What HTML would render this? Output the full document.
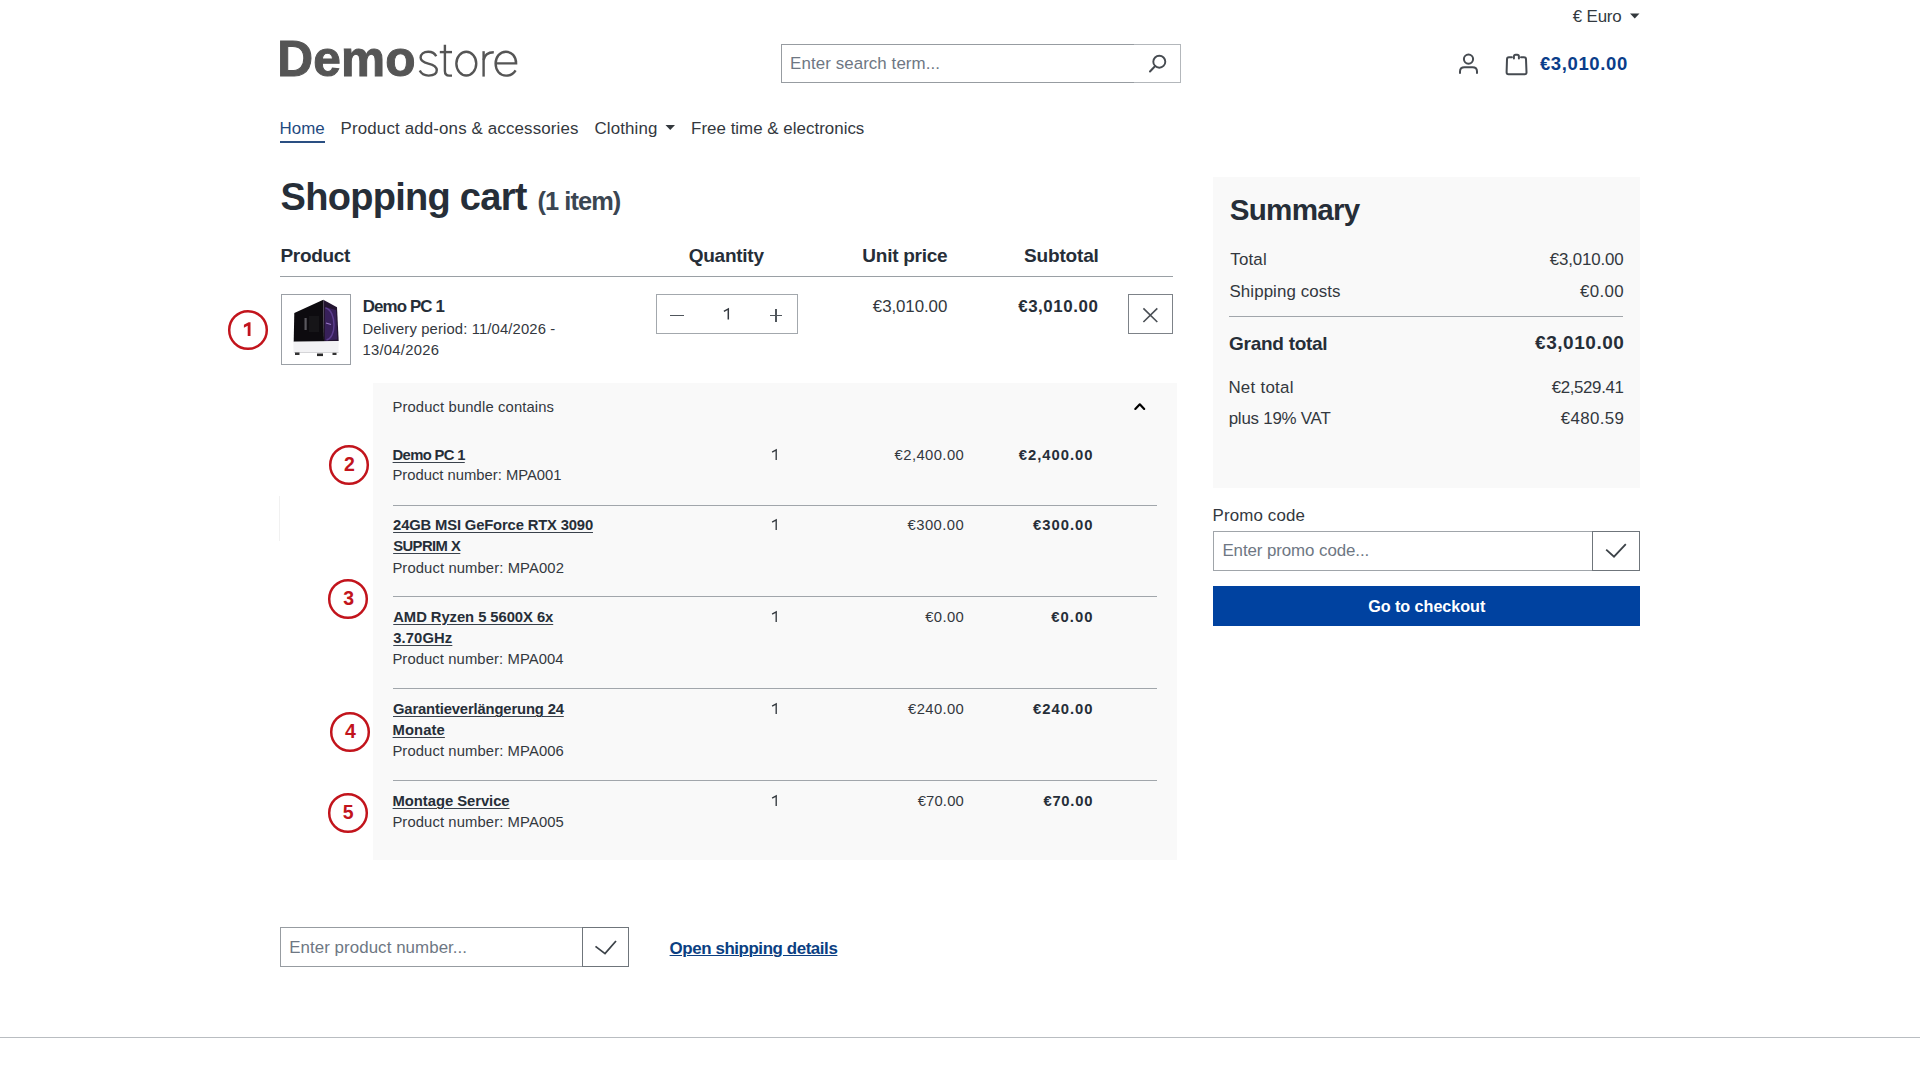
<!DOCTYPE html>
<html><head><meta charset="utf-8"><title>Shopping cart | Demostore</title>
<style>
html,body{margin:0;padding:0;background:#fff;width:1920px;height:1080px;overflow:hidden}
body{position:relative;font-family:"Liberation Sans",sans-serif}
.t{position:absolute;white-space:nowrap;font-family:"Liberation Sans",sans-serif}
.b{position:absolute;box-sizing:border-box}
.ic{position:absolute;overflow:visible}
</style></head><body>
<div class="t " style="left:1572.85px;top:7.00px;font-size:16.9px;line-height:19px;letter-spacing:-0.190px;color:#333a40;">€ Euro</div>
<svg class="ic" style="left:1628px;top:11px" width="14" height="10"><path d="M2 2.5 L11.5 2.5 L6.75 7.5 Z" fill="#33383d"/></svg>
<div class="t " style="left:277.20px;top:31.40px;font-size:49.6px;line-height:56px;font-weight:700;letter-spacing:0.150px;color:#555555;-webkit-text-stroke:1px #555555;">Demo</div>
<svg class="ic" style="left:0;top:0" width="530" height="90"><g fill="none" stroke="#555555" stroke-width="2.4">
<path d="M436.2 56.3 C434.8 53.2 431.8 51.7 428.2 51.7 C423.6 51.7 420.6 54.3 420.6 57.6 C420.6 61.2 423.5 62.4 428.3 63.6 C433.5 64.9 436.8 66.3 436.8 70.1 C436.8 73.5 433.6 75.6 428.6 75.6 C424.3 75.6 421.2 73.7 419.8 70.6"/>
<path d="M444.9 44.8 V71 C444.9 74.3 446.3 75.6 449.2 75.6 H452"/>
<path d="M439.8 52.1 H452"/>
<ellipse cx="466.3" cy="63.6" rx="9.95" ry="11.9"/>
<path d="M483.6 51.2 V76.6"/>
<path d="M483.6 60 C484.6 54.5 488 52.3 493.8 52.3"/>
<path d="M495.6 63.4 H516.1 C516.1 56.4 511.6 51.7 505.9 51.7 C499.9 51.7 495.6 56.9 495.6 63.6 C495.6 70.5 500 75.6 506.1 75.6 C510.4 75.6 513.6 73.6 515.6 70.3"/>
</g></svg>
<div class="b" style="left:781px;top:44px;width:400px;height:39px;border:1px solid #979ca1;background:#fff"></div>
<div class="b" style="left:1134px;top:44px;width:47px;height:39px;border:1px solid #b3b7bb;border-left:0"></div>
<div class="t " style="left:790.10px;top:54.00px;font-size:16.9px;line-height:19px;letter-spacing:0.082px;color:#6e7783;">Enter search term...</div>
<svg class="ic" style="left:1145px;top:50px" width="24" height="26"><circle cx="14.3" cy="11.7" r="6" fill="none" stroke="#464b51" stroke-width="1.9"/><path d="M10.2 16 L5 21.5" stroke="#464b51" stroke-width="2" stroke-linecap="round"/></svg>
<svg class="ic" style="left:1456px;top:50px" width="26" height="28"><circle cx="12.5" cy="9.1" r="4.6" fill="none" stroke="#464b51" stroke-width="2"/><path d="M4 23 V21.5 C4 18.5 5.8 17.2 8.5 17.2 H16.5 C19.2 17.2 21 18.5 21 21.5 V23" fill="none" stroke="#464b51" stroke-width="2" stroke-linecap="round"/></svg>
<svg class="ic" style="left:1500px;top:48px" width="32" height="32"><path d="M11.9 9.2 H8.9 C7.6 9.2 7 10 7 11.3 L6.6 24.3 C6.6 25.5 7.3 26.2 8.5 26.2 H24.7 C25.9 26.2 26.6 25.5 26.5 24.3 L26 11.3 C26 10 25.3 9.2 24 9.2 H21" fill="none" stroke="#464b51" stroke-width="2" stroke-linecap="round"/><path d="M13.9 10.6 V8.6 C13.9 7.4 14.5 6.8 15.6 6.8 H17.2 C18.3 6.8 18.9 7.4 18.9 8.6 V10.6" fill="none" stroke="#464b51" stroke-width="2" stroke-linecap="round"/></svg>
<div class="t " style="left:1539.90px;top:52.60px;font-size:18.5px;line-height:21px;font-weight:700;letter-spacing:0.631px;color:#0a3d8a;">€3,010.00</div>
<div class="t " style="left:279.60px;top:118.80px;font-size:16.9px;line-height:19px;letter-spacing:0.017px;color:#1f4a80;">Home</div>
<div class="b" style="left:280px;top:141px;width:45px;height:2px;background:#2a4f82"></div>
<div class="t " style="left:340.60px;top:118.80px;font-size:16.9px;line-height:19px;letter-spacing:0.146px;color:#33383e;">Product add-ons &amp; accessories</div>
<div class="t " style="left:594.45px;top:118.80px;font-size:16.9px;line-height:19px;letter-spacing:0.136px;color:#33383e;">Clothing</div>
<svg class="ic" style="left:664px;top:123px" width="13" height="9"><path d="M1.5 2 L11 2 L6.25 7 Z" fill="#33383d"/></svg>
<div class="t " style="left:691.10px;top:118.80px;font-size:16.9px;line-height:19px;letter-spacing:0.023px;color:#33383e;">Free time &amp; electronics</div>
<div class="t " style="left:280.60px;top:176.00px;font-size:38.0px;line-height:42px;font-weight:700;letter-spacing:-0.717px;color:#262e38;">Shopping cart</div>
<div class="t " style="left:537.55px;top:187.00px;font-size:25.4px;line-height:28px;font-weight:700;letter-spacing:-0.943px;color:#3b4652;">(1 item)</div>
<div class="t " style="left:280.55px;top:245.00px;font-size:19.0px;line-height:21px;font-weight:700;letter-spacing:-0.350px;color:#262e38;">Product</div>
<div class="t " style="left:688.75px;top:245.00px;font-size:19.0px;line-height:21px;font-weight:700;letter-spacing:-0.257px;color:#262e38;">Quantity</div>
<div class="t " style="left:862.35px;top:245.00px;font-size:19.0px;line-height:21px;font-weight:700;letter-spacing:-0.267px;color:#262e38;">Unit price</div>
<div class="t " style="left:1024.05px;top:245.00px;font-size:19.0px;line-height:21px;font-weight:700;letter-spacing:-0.171px;color:#262e38;">Subtotal</div>
<div class="b" style="left:280px;top:276px;width:893px;height:1px;background:#9aa0a5"></div>
<div class="b" style="left:281px;top:294px;width:70px;height:71px;border:1px solid #9ba0a6;background:#fff"></div>
<svg class="ic" style="left:280px;top:293px" width="72" height="72">
<polygon points="14.3,20 43.3,6.7 44,48.7 13.7,48.7" fill="#0d0b0f"/>
<polygon points="43.3,6.7 57,14.3 58.7,48 44,48.7" fill="#231530"/>
<polygon points="45,14 56,17 57.3,46.5 45,47.5" fill="#3b2260" opacity="0.85"/>
<path d="M45.5 15 C51 16 54 24 54 32 C54 40 51 46 46.5 47" fill="none" stroke="#6d4ca6" stroke-width="1.4" opacity="0.7"/>
<path d="M46 30 L51 31.5" stroke="#9a78c8" stroke-width="1.2"/>
<rect x="24.5" y="25" width="2.2" height="12" fill="#5a585e"/>
<rect x="29" y="23" width="10" height="16" fill="#161518"/>
<polygon points="13.3,48.7 58.7,48 58.5,59.5 13.5,59.5" fill="#f2f2f4"/>
<path d="M14 59.5 H58.5" stroke="#d5d5d8" stroke-width="1"/>
<rect x="15" y="59.5" width="4.5" height="2.5" fill="#333"/>
<rect x="37" y="60.5" width="6" height="2.6" fill="#2a2a2a"/>
<rect x="52.5" y="59.8" width="4" height="2.2" fill="#333"/>
</svg>
<div class="t " style="left:362.65px;top:297.00px;font-size:16.9px;line-height:19px;font-weight:700;letter-spacing:-0.862px;color:#262e38;">Demo PC 1</div>
<div class="t " style="left:362.40px;top:320.80px;font-size:14.8px;line-height:16px;letter-spacing:0.139px;color:#33383e;">Delivery period: 11/04/2026 -</div>
<div class="t " style="left:362.50px;top:341.80px;font-size:14.8px;line-height:16px;letter-spacing:0.261px;color:#33383e;">13/04/2026</div>
<div class="b" style="left:656px;top:294px;width:142px;height:40px;border:1px solid #a3a8ad;background:#fff"></div>
<div class="b" style="left:670.4px;top:314.5px;width:13.3px;height:1.6px;background:#50565c"></div>
<div class="b" style="left:769.6px;top:314.5px;width:12.9px;height:1.6px;background:#50565c"></div>
<div class="b" style="left:775.4px;top:309px;width:1.6px;height:12.7px;background:#50565c"></div>
<svg class="ic" style="left:720px;top:305px" width="14" height="18"><path d="M3.9 6.3 L8.3 3.9 V14.6" fill="none" stroke="#33383e" stroke-width="1.5" stroke-linejoin="miter"/></svg>
<div class="t " style="left:872.85px;top:296.60px;font-size:16.9px;line-height:19px;letter-spacing:-0.088px;color:#33383e;">€3,010.00</div>
<div class="t " style="left:1018.20px;top:296.70px;font-size:16.9px;line-height:19px;font-weight:700;letter-spacing:0.562px;color:#262e38;">€3,010.00</div>
<div class="b" style="left:1128px;top:294px;width:45px;height:40px;border:1px solid #7d8288;background:#fff"></div>
<svg class="ic" style="left:1140px;top:305px" width="20" height="20"><path d="M3.4 3.4 L17.3 17 M17.3 3.4 L3.4 17" stroke="#4a4f55" stroke-width="1.6"/></svg>
<div class="b" style="left:373px;top:383px;width:804px;height:477px;background:#f9f9f9"></div>
<div class="t " style="left:392.40px;top:398.70px;font-size:14.8px;line-height:16px;letter-spacing:0.130px;color:#33383e;">Product bundle contains</div>
<svg class="ic" style="left:1130px;top:398px" width="20" height="16"><path d="M5.3 10.9 L9.8 6.3 L14.2 10.9" fill="none" stroke="#000" stroke-width="2.2" stroke-linecap="round" stroke-linejoin="round"/></svg>
<div class="t " style="left:392.60px;top:446.60px;font-size:14.8px;line-height:16px;font-weight:700;letter-spacing:-0.662px;color:#262e38;text-decoration:underline;text-decoration-thickness:1px;text-underline-offset:1.5px;text-decoration-color:#3a424c;">Demo PC 1</div>
<div class="t " style="left:392.40px;top:467.40px;font-size:14.8px;line-height:16px;color:#33383e;">Product number: MPA001</div>
<svg class="ic" style="left:768px;top:447px" width="14" height="16"><path d="M4.1 5.2 L8.2 3 V13" fill="none" stroke="#33383e" stroke-width="1.35"/></svg>
<div class="t " style="left:894.60px;top:447.00px;font-size:14.8px;line-height:16px;letter-spacing:0.419px;color:#33383e;">€2,400.00</div>
<div class="t " style="left:1018.70px;top:447.00px;font-size:14.8px;line-height:16px;font-weight:700;letter-spacing:0.994px;color:#262e38;">€2,400.00</div>
<div class="t " style="left:393.10px;top:516.80px;font-size:14.8px;line-height:16px;font-weight:700;letter-spacing:-0.163px;color:#262e38;text-decoration:underline;text-decoration-thickness:1px;text-underline-offset:1.5px;text-decoration-color:#3a424c;">24GB MSI GeForce RTX 3090</div>
<div class="t " style="left:393.15px;top:537.60px;font-size:14.8px;line-height:16px;font-weight:700;letter-spacing:-0.550px;color:#262e38;text-decoration:underline;text-decoration-thickness:1px;text-underline-offset:1.5px;text-decoration-color:#3a424c;">SUPRIM X</div>
<div class="t " style="left:392.40px;top:559.50px;font-size:14.8px;line-height:16px;letter-spacing:0.112px;color:#33383e;">Product number: MPA002</div>
<svg class="ic" style="left:768px;top:516.8px" width="14" height="16"><path d="M4.1 5.2 L8.2 3 V13" fill="none" stroke="#33383e" stroke-width="1.35"/></svg>
<div class="t " style="left:907.50px;top:516.80px;font-size:14.8px;line-height:16px;letter-spacing:0.467px;color:#33383e;">€300.00</div>
<div class="t " style="left:1032.90px;top:516.80px;font-size:14.8px;line-height:16px;font-weight:700;letter-spacing:1.017px;color:#262e38;">€300.00</div>
<div class="t " style="left:393.25px;top:608.60px;font-size:14.8px;line-height:16px;font-weight:700;letter-spacing:-0.061px;color:#262e38;text-decoration:underline;text-decoration-thickness:1px;text-underline-offset:1.5px;text-decoration-color:#3a424c;">AMD Ryzen 5 5600X 6x</div>
<div class="t " style="left:393.25px;top:629.50px;font-size:14.8px;line-height:16px;font-weight:700;letter-spacing:0.100px;color:#262e38;text-decoration:underline;text-decoration-thickness:1px;text-underline-offset:1.5px;text-decoration-color:#3a424c;">3.70GHz</div>
<div class="t " style="left:392.40px;top:650.80px;font-size:14.8px;line-height:16px;letter-spacing:0.098px;color:#33383e;">Product number: MPA004</div>
<svg class="ic" style="left:768px;top:608.6px" width="14" height="16"><path d="M4.1 5.2 L8.2 3 V13" fill="none" stroke="#33383e" stroke-width="1.35"/></svg>
<div class="t " style="left:925.20px;top:608.60px;font-size:14.8px;line-height:16px;letter-spacing:0.387px;color:#33383e;">€0.00</div>
<div class="t " style="left:1051.20px;top:608.60px;font-size:14.8px;line-height:16px;font-weight:700;letter-spacing:1.062px;color:#262e38;">€0.00</div>
<div class="t " style="left:393.00px;top:701.30px;font-size:14.8px;line-height:16px;font-weight:700;letter-spacing:-0.155px;color:#262e38;text-decoration:underline;text-decoration-thickness:1px;text-underline-offset:1.5px;text-decoration-color:#3a424c;">Garantieverlängerung 24</div>
<div class="t " style="left:392.60px;top:721.90px;font-size:14.8px;line-height:16px;font-weight:700;letter-spacing:0.080px;color:#262e38;text-decoration:underline;text-decoration-thickness:1px;text-underline-offset:1.5px;text-decoration-color:#3a424c;">Monate</div>
<div class="t " style="left:392.40px;top:742.70px;font-size:14.8px;line-height:16px;letter-spacing:0.107px;color:#33383e;">Product number: MPA006</div>
<svg class="ic" style="left:768px;top:701.0px" width="14" height="16"><path d="M4.1 5.2 L8.2 3 V13" fill="none" stroke="#33383e" stroke-width="1.35"/></svg>
<div class="t " style="left:908.10px;top:701.00px;font-size:14.8px;line-height:16px;letter-spacing:0.367px;color:#33383e;">€240.00</div>
<div class="t " style="left:1033.10px;top:701.00px;font-size:14.8px;line-height:16px;font-weight:700;letter-spacing:0.983px;color:#262e38;">€240.00</div>
<div class="t " style="left:392.60px;top:792.80px;font-size:14.8px;line-height:16px;font-weight:700;letter-spacing:-0.046px;color:#262e38;text-decoration:underline;text-decoration-thickness:1px;text-underline-offset:1.5px;text-decoration-color:#3a424c;">Montage Service</div>
<div class="t " style="left:392.40px;top:813.50px;font-size:14.8px;line-height:16px;letter-spacing:0.107px;color:#33383e;">Product number: MPA005</div>
<svg class="ic" style="left:768px;top:792.8px" width="14" height="16"><path d="M4.1 5.2 L8.2 3 V13" fill="none" stroke="#33383e" stroke-width="1.35"/></svg>
<div class="t " style="left:917.70px;top:792.80px;font-size:14.8px;line-height:16px;letter-spacing:0.160px;color:#33383e;">€70.00</div>
<div class="t " style="left:1043.40px;top:792.80px;font-size:14.8px;line-height:16px;font-weight:700;letter-spacing:0.760px;color:#262e38;">€70.00</div>
<div class="b" style="left:393px;top:505px;width:764px;height:1px;background:#a1a6ab"></div>
<div class="b" style="left:393px;top:596px;width:764px;height:1px;background:#a1a6ab"></div>
<div class="b" style="left:393px;top:688px;width:764px;height:1px;background:#a1a6ab"></div>
<div class="b" style="left:393px;top:780px;width:764px;height:1px;background:#a1a6ab"></div>
<svg class="ic" style="left:226px;top:307.7px" width="44" height="44"><circle cx="22" cy="22" r="18.8" fill="none" stroke="#c2141c" stroke-width="2.5"/></svg>
<svg class="ic" style="left:226px;top:307.7px" width="44" height="44"><path d="M17.9 16.7 L22.6 14.2 H24.5 V28.1 H21.7 V17.7 L17.9 19.7 Z" fill="#c2141c"/></svg>
<svg class="ic" style="left:327px;top:442.8px" width="44" height="44"><circle cx="22" cy="22" r="18.8" fill="none" stroke="#c2141c" stroke-width="2.5"/></svg>
<div class="t " style="left:343.95px;top:453.10px;font-size:19.5px;line-height:22px;font-weight:700;color:#c2141c;">2</div>
<svg class="ic" style="left:326.2px;top:576.9px" width="44" height="44"><circle cx="22" cy="22" r="18.8" fill="none" stroke="#c2141c" stroke-width="2.5"/></svg>
<div class="t " style="left:343.20px;top:587.20px;font-size:19.5px;line-height:22px;font-weight:700;color:#c2141c;">3</div>
<svg class="ic" style="left:328.1px;top:709.7px" width="44" height="44"><circle cx="22" cy="22" r="18.8" fill="none" stroke="#c2141c" stroke-width="2.5"/></svg>
<div class="t " style="left:344.88px;top:720.00px;font-size:19.5px;line-height:22px;font-weight:700;color:#c2141c;">4</div>
<svg class="ic" style="left:325.9px;top:791.1px" width="44" height="44"><circle cx="22" cy="22" r="18.8" fill="none" stroke="#c2141c" stroke-width="2.5"/></svg>
<div class="t " style="left:342.75px;top:801.40px;font-size:19.5px;line-height:22px;font-weight:700;color:#c2141c;">5</div>
<div class="b" style="left:1213px;top:177px;width:427px;height:311px;background:#f9f9f9"></div>
<div class="t " style="left:1229.75px;top:193.00px;font-size:29.6px;line-height:33px;font-weight:700;letter-spacing:-0.750px;color:#262e38;">Summary</div>
<div class="t " style="left:1230.25px;top:250.00px;font-size:16.9px;line-height:19px;letter-spacing:0.188px;color:#33383e;">Total</div>
<div class="t " style="left:1549.85px;top:250.00px;font-size:16.9px;line-height:19px;letter-spacing:-0.163px;color:#33383e;">€3,010.00</div>
<div class="t " style="left:1229.45px;top:281.50px;font-size:16.9px;line-height:19px;letter-spacing:0.096px;color:#33383e;">Shipping costs</div>
<div class="t " style="left:1580.05px;top:281.50px;font-size:16.9px;line-height:19px;letter-spacing:0.350px;color:#33383e;">€0.00</div>
<div class="b" style="left:1229px;top:316px;width:394px;height:1px;background:#a1a6ab"></div>
<div class="t " style="left:1229.05px;top:332.60px;font-size:19.0px;line-height:21px;font-weight:700;letter-spacing:-0.275px;color:#262e38;">Grand total</div>
<div class="t " style="left:1535.10px;top:332.40px;font-size:19.0px;line-height:21px;font-weight:700;letter-spacing:0.531px;color:#262e38;">€3,010.00</div>
<div class="t " style="left:1228.40px;top:377.70px;font-size:16.9px;line-height:19px;letter-spacing:0.269px;color:#33383e;">Net total</div>
<div class="t " style="left:1551.75px;top:377.80px;font-size:16.9px;line-height:19px;letter-spacing:-0.381px;color:#33383e;">€2,529.41</div>
<div class="t " style="left:1228.70px;top:409.40px;font-size:16.9px;line-height:19px;letter-spacing:-0.227px;color:#33383e;">plus 19% VAT</div>
<div class="t " style="left:1560.85px;top:409.30px;font-size:16.9px;line-height:19px;letter-spacing:0.325px;color:#33383e;">€480.59</div>
<div class="t " style="left:1212.60px;top:505.70px;font-size:16.9px;line-height:19px;letter-spacing:0.139px;color:#33383e;">Promo code</div>
<div class="b" style="left:1213px;top:531px;width:427px;height:40px;border:1px solid #a0a5aa;background:#fff"></div>
<div class="b" style="left:1592px;top:531px;width:48px;height:40px;border:1px solid #6f757b;background:#fff"></div>
<div class="t " style="left:1222.40px;top:541.00px;font-size:16.9px;line-height:19px;letter-spacing:-0.083px;color:#6e7783;">Enter promo code...</div>
<svg class="ic" style="left:1600px;top:538px" width="32" height="26"><path d="M6.2 11.7 L14 18.7 L25.8 6.2" fill="none" stroke="#3c4248" stroke-width="1.8"/></svg>
<div class="b" style="left:1213px;top:586px;width:427px;height:40px;background:#0042a0"></div>
<div class="t " style="left:1368.15px;top:597.20px;font-size:16.2px;line-height:18px;font-weight:700;letter-spacing:-0.050px;color:#ffffff;">Go to checkout</div>
<div class="b" style="left:280px;top:927px;width:349px;height:40px;border:1px solid #979ca1;background:#fff"></div>
<div class="b" style="left:582px;top:927px;width:47px;height:40px;border:1px solid #6f757b;background:#fff"></div>
<div class="t " style="left:289.20px;top:938.00px;font-size:16.9px;line-height:19px;letter-spacing:0.061px;color:#6e7783;">Enter product number...</div>
<svg class="ic" style="left:588px;top:934px" width="32" height="26"><path d="M7.5 12.4 L17 19.6 L28 7" fill="none" stroke="#3c4248" stroke-width="1.8"/></svg>
<div class="t " style="left:669.60px;top:938.60px;font-size:16.9px;line-height:19px;font-weight:700;letter-spacing:-0.412px;color:#0b3f82;text-decoration:underline;text-decoration-thickness:1.3px;text-underline-offset:0.8px;">Open shipping details</div>
<div class="b" style="left:0px;top:1037px;width:1920px;height:1px;background:#b9bdc1"></div>
<div class="b" style="left:279px;top:496px;width:1px;height:45px;background:#f1f1f1"></div>
</body></html>
